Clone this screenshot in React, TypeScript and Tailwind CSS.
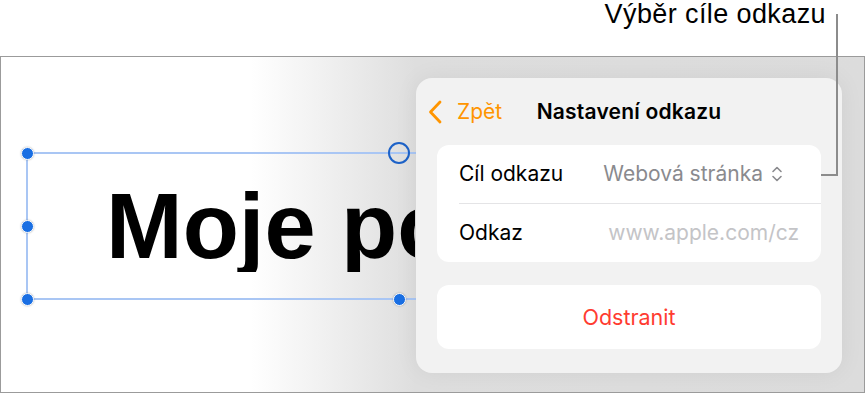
const ui = "font-['Inter','Noto_Sans',sans-serif]";

function Dot({ className }: { className: string }) {
  return (
    <span
      className={`absolute w-[13px] h-[13px] -ml-[6.5px] -mt-[6.5px] rounded-full bg-[#1a6fe3] border-[1.5px] border-white shadow-[0_0_2px_rgba(0,0,0,0.3)] ${className}`}
    />
  );
}

function UpDown() {
  return (
    <svg width="12" height="18" viewBox="0 0 12 18" fill="none" stroke="#8a8a8e" strokeWidth="1.6" strokeLinecap="round" strokeLinejoin="round">
      <path d="M2 6.5 L6 2.5 L10 6.5" />
      <path d="M2 11.5 L6 15.5 L10 11.5" />
    </svg>
  );
}

function LinkPopover() {
  return (
    <div className={`absolute left-[415px] top-[21px] w-[426px] h-[295px] rounded-[16px] bg-[#f2f2f2] shadow-[0_0_24px_rgba(0,0,0,0.06)] ${ui}`}>
      <div className="h-[67px] grid grid-cols-[1fr_auto_1fr] items-center">
        <div className="flex items-center pl-[12px] gap-[15px] text-[#ff9500]">
          <svg width="14" height="24" viewBox="0 0 14 24" fill="none" stroke="currentColor" strokeWidth="2.8" strokeLinecap="round" strokeLinejoin="round">
            <path d="M12 2 L2.5 12 L12 22" />
          </svg>
          <span className="text-[21px] leading-none">Zpět</span>
        </div>
        <div className="text-[21px] font-semibold text-black leading-none tracking-[0.2px]">Nastavení odkazu</div>
        <div />
      </div>

      <div className="mx-[21px] rounded-[12px] bg-white">
        <div className="h-[58px] flex items-center justify-between pl-[22px] pr-[38px] text-[21px]">
          <span className="text-black">Cíl odkazu</span>
          <span className="flex items-center gap-[8px] text-[#8a8a8e]">
            Webová stránka
            <UpDown />
          </span>
        </div>
        <div className="ml-[22px] h-px bg-[#e4e4e6]" />
        <div className="h-[58px] flex items-center justify-between pl-[22px] pr-[22px] text-[21px]">
          <span className="text-black">Odkaz</span>
          <span className="text-[#c4c4c7]">www.apple.com/cz</span>
        </div>
      </div>

      <div className="mx-[21px] mt-[23px] h-[64px] rounded-[12px] bg-white flex items-center justify-center text-[21.5px] text-[#ff3b30]">
        Odstranit
      </div>
    </div>
  );
}

export default function App() {
  return (
    <div className="relative w-[865px] h-[394px] bg-white overflow-hidden">
      <div className="h-[56px] flex justify-end pr-[39px] pt-[1px]">
        <span className="font-['Liberation_Sans','Arial',sans-serif] text-[27px] leading-none text-black tracking-[0.4px]">
          Výběr cíle odkazu
        </span>
      </div>

      <div className="relative w-[865px] h-[337px] border border-[#9b9b9b] bg-[linear-gradient(to_right,#ffffff_29%,#dedede_48%,#dcdcdc_100%)]">
        <div className="absolute left-[25px] top-[95px] w-[743px] h-[148px] border-2 border-[#a9c6f4] flex items-center">
          <div className="w-[387px] overflow-hidden">
            <span className="block pl-[78px] font-['Liberation_Sans','Arial',sans-serif] font-bold text-[92px] leading-none text-black whitespace-nowrap">
              Moje po
            </span>
          </div>
          <Dot className="left-[-1px] top-[-1px]" />
          <Dot className="left-[-1px] top-1/2" />
          <Dot className="left-[-1px] top-[calc(100%+1px)]" />
          <Dot className="left-[371px] top-[calc(100%+1px)]" />
          <span className="absolute left-[371px] top-[-1px] w-[22px] h-[22px] -ml-[11px] -mt-[11px] rounded-full border-2 border-[#1d62c8]" />
        </div>

        <LinkPopover />
      </div>

      <div className="absolute left-[836px] top-[14px] w-[2px] h-[162px] bg-[#8c8c8c]" />
      <div className="absolute left-[821px] top-[174px] w-[17px] h-[2px] bg-[#8c8c8c]" />
    </div>
  );
}
